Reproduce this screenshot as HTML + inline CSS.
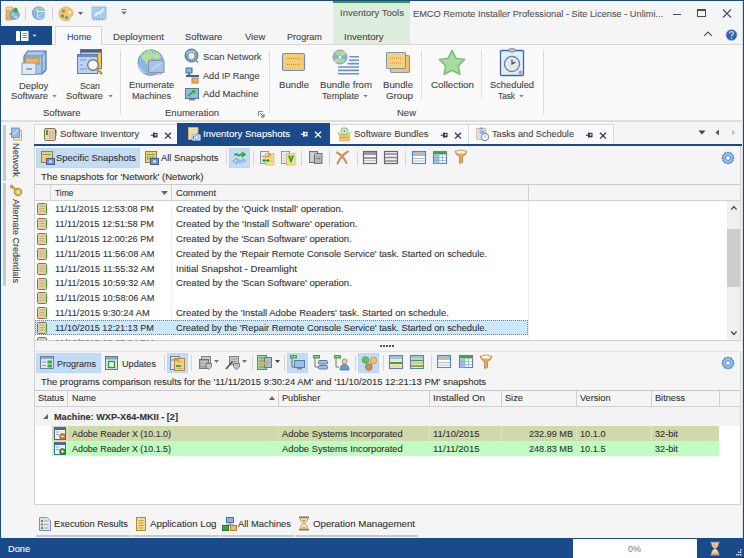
<!DOCTYPE html><html><head><meta charset='utf-8'><style>
html,body{margin:0;padding:0;width:744px;height:558px;overflow:hidden;background:#f5f5f5;font-family:"Liberation Sans",sans-serif;position:relative}
div{box-sizing:border-box}
</style></head><body>
<div style='position:absolute;left:0px;top:0px;width:744px;height:558px;background:#f5f5f5;'></div>
<div style='position:absolute;left:333px;top:0px;width:77px;height:44px;background:#deeede;'></div>
<div style='position:absolute;left:333px;top:1px;width:77px;height:2px;background:#3a9a3a;'></div>
<div style='position:absolute;left:0px;top:0px;width:744px;height:1px;background:#1a4a8a;'></div>
<div style='position:absolute;left:0px;top:0px;width:1px;height:558px;background:#1a4a8a;'></div>
<div style='position:absolute;left:743px;top:0px;width:1px;height:558px;background:#1a4a8a;'></div>
<div style='position:absolute;left:1px;top:44px;width:742px;height:1px;background:#d6d6d6;'></div>
<div style='position:absolute;left:1px;top:26px;width:51px;height:19px;background:#1a4a8a;'></div>
<div style='position:absolute;left:55px;top:26px;width:47px;height:19px;background:#fafafa;border:1px solid #d6d6d6;border-bottom:none;'></div>
<div style='position:absolute;left:1px;top:45px;width:742px;height:75px;background:#fafafa;'></div>
<div style='position:absolute;left:1px;top:120px;width:742px;height:2px;background:#dfdfdf;'></div>
<div style='position:absolute;left:673px;top:14px;width:8px;height:1px;background:#4e4a62;'></div>
<div style='position:absolute;left:697px;top:9px;width:9px;height:8px;background:transparent;border:1px solid #4e4a62;border-top-width:2px;'></div>
<svg style='position:absolute;left:722px;top:9px' width='10' height='9'><path d='M1 0.5 L9 8.5 M9 0.5 L1 8.5' stroke='#4e4a62' stroke-width='1.1'/></svg>
<svg style='position:absolute;left:703px;top:30px' width='10' height='7'><path d='M1.2 5.8 L5 2 L8.8 5.8' stroke='#4e4a62' stroke-width='1.2' fill='none'/></svg>
<svg style='position:absolute;left:725px;top:29px' width='13' height='13'><circle cx='6.5' cy='6' r='5.6' fill='#3463a8' stroke='#9cc4ee' stroke-width='.7'/><path d='M4.6 4.6 Q4.6 2.6 6.5 2.6 Q8.4 2.6 8.4 4.4 Q8.4 5.6 6.6 6.4 V7.6' stroke='#c8dcf4' stroke-width='1.2' fill='none'/><circle cx='6.6' cy='9.3' r='.8' fill='#c8dcf4'/></svg>
<div style='position:absolute;left:742px;top:1px;width:1px;height:537px;background:#dcdce4;'></div>
<div style='position:absolute;left:120px;top:50px;width:1px;height:64px;background:#dcdcdc;'></div>
<div style='position:absolute;left:269px;top:50px;width:1px;height:64px;background:#dcdcdc;'></div>
<div style='position:absolute;left:543px;top:50px;width:1px;height:64px;background:#dcdcdc;'></div>
<div style='position:absolute;left:421px;top:50px;width:1px;height:49px;background:#dcdcdc;'></div>
<div style='position:absolute;left:481px;top:50px;width:1px;height:49px;background:#dcdcdc;'></div>
<svg style='position:absolute;left:51.5px;top:94.8px' width='5' height='3'><path d='M0.3 0 L4.7 0 L2.5 2.4 Z' fill='#808080'/></svg>
<svg style='position:absolute;left:107.5px;top:94.8px' width='5' height='3'><path d='M0.3 0 L4.7 0 L2.5 2.4 Z' fill='#808080'/></svg>
<svg style='position:absolute;left:362.5px;top:94.8px' width='5' height='3'><path d='M0.3 0 L4.7 0 L2.5 2.4 Z' fill='#808080'/></svg>
<svg style='position:absolute;left:519px;top:94.8px' width='5' height='3'><path d='M0.3 0 L4.7 0 L2.5 2.4 Z' fill='#808080'/></svg>
<div style='position:absolute;left:3px;top:125px;width:3px;height:56px;background:#c9c9c9;'></div>
<div style='position:absolute;left:3px;top:183px;width:3px;height:103px;background:#c9c9c9;'></div>
<div style='position:absolute;left:34px;top:124px;width:144px;height:21px;background:#fafafa;border:1px solid #d9d9d9;border-bottom:none;'></div>
<div style='position:absolute;left:177px;top:123px;width:153px;height:23px;background:#1a4a8a;'></div>
<div style='position:absolute;left:330px;top:124px;width:139px;height:21px;background:#fafafa;border:1px solid #d9d9d9;border-bottom:none;border-left:none;'></div>
<div style='position:absolute;left:468px;top:124px;width:146px;height:21px;background:#fafafa;border:1px solid #d9d9d9;border-bottom:none;'></div>
<div style='position:absolute;left:34px;top:144px;width:708px;height:2px;background:#1a4a8a;'></div>
<div style='position:absolute;left:34px;top:146px;width:1px;height:359px;background:#d4d4d4;'></div>
<div style='position:absolute;left:740px;top:146px;width:1px;height:359px;background:#d4d4d4;'></div>
<div style='position:absolute;left:36px;top:148px;width:104px;height:20px;background:#c2dcf6;border:1px dotted #b4d2f0;'></div>
<div style='position:absolute;left:229px;top:148px;width:21px;height:20px;background:#c2dcf6;border:1px dotted #b4d2f0;'></div>
<div style='position:absolute;left:226px;top:150px;width:1px;height:16px;background:#d6d6d6;'></div>
<div style='position:absolute;left:253px;top:150px;width:1px;height:16px;background:#d6d6d6;'></div>
<div style='position:absolute;left:301px;top:150px;width:1px;height:16px;background:#d6d6d6;'></div>
<div style='position:absolute;left:329px;top:150px;width:1px;height:16px;background:#d6d6d6;'></div>
<div style='position:absolute;left:357px;top:150px;width:1px;height:16px;background:#d6d6d6;'></div>
<div style='position:absolute;left:405px;top:150px;width:1px;height:16px;background:#d6d6d6;'></div>
<div style='position:absolute;left:35px;top:184px;width:705px;height:17px;background:#f5f5f5;border-top:1px solid #c9c9c9;border-bottom:1px solid #d2d2d2;'></div>
<div style='position:absolute;left:50px;top:185px;width:1px;height:15px;background:#d8d8d8;'></div>
<div style='position:absolute;left:171px;top:185px;width:1px;height:15px;background:#d0d0d0;'></div>
<div style='position:absolute;left:528px;top:185px;width:1px;height:15px;background:#d0d0d0;'></div>
<svg style='position:absolute;left:161px;top:191px' width='7' height='4'><path d='M0 0 L7 0 L3.5 4 Z' fill='#666'/></svg>
<div style='position:absolute;left:35px;top:201px;width:692px;height:139px;background:#ffffff;'></div>
<div style='position:absolute;left:171px;top:201px;width:1px;height:139px;background:#f0f0f0;'></div>
<div style='position:absolute;left:528px;top:201px;width:1px;height:139px;background:#f0f0f0;'></div>
<div style='position:absolute;left:727px;top:201px;width:13px;height:139px;background:#f0f0f0;'></div>
<div style='position:absolute;left:727px;top:229px;width:13px;height:58px;background:#cdcdcd;'></div>
<svg style='position:absolute;left:730px;top:205px' width='8' height='6'><path d='M1.2 4.6 L3.9 1.6 L6.6 4.6' stroke='#4e4a62' stroke-width='1.4' fill='none'/></svg>
<svg style='position:absolute;left:730px;top:330px' width='8' height='6'><path d='M1.2 1.4 L3.9 4.4 L6.6 1.4' stroke='#4e4a62' stroke-width='1.4' fill='none'/></svg>
<div style='position:absolute;left:35px;top:340px;width:706px;height:1px;background:#cfcfcf;'></div>
<div style='position:absolute;left:35px;top:320px;width:493px;height:15px;background:#cce8fa;border:1px dotted #6a84a8;'></div>
<div style='position:absolute;left:35px;top:341px;width:706px;height:10px;background:#f5f5f5;'></div>
<div style='position:absolute;left:380px;top:345px;width:2px;height:2px;background:#555;'></div>
<div style='position:absolute;left:383px;top:345px;width:2px;height:2px;background:#555;'></div>
<div style='position:absolute;left:386px;top:345px;width:2px;height:2px;background:#555;'></div>
<div style='position:absolute;left:389px;top:345px;width:2px;height:2px;background:#555;'></div>
<div style='position:absolute;left:392px;top:345px;width:2px;height:2px;background:#555;'></div>
<div style='position:absolute;left:35px;top:351px;width:706px;height:1px;background:#e3e3e3;'></div>
<div style='position:absolute;left:36px;top:353px;width:65px;height:20px;background:#c2dcf6;border:1px dotted #b4d2f0;'></div>
<div style='position:absolute;left:167px;top:353px;width:21px;height:20px;background:#c2dcf6;border:1px dotted #b4d2f0;'></div>
<div style='position:absolute;left:287px;top:353px;width:21px;height:20px;background:#c2dcf6;border:1px dotted #b4d2f0;'></div>
<div style='position:absolute;left:358px;top:353px;width:21px;height:20px;background:#c2dcf6;border:1px dotted #b4d2f0;'></div>
<div style='position:absolute;left:164px;top:355px;width:1px;height:16px;background:#d6d6d6;'></div>
<div style='position:absolute;left:191px;top:355px;width:1px;height:16px;background:#d6d6d6;'></div>
<div style='position:absolute;left:252px;top:355px;width:1px;height:16px;background:#d6d6d6;'></div>
<div style='position:absolute;left:284px;top:355px;width:1px;height:16px;background:#d6d6d6;'></div>
<div style='position:absolute;left:355px;top:355px;width:1px;height:16px;background:#d6d6d6;'></div>
<div style='position:absolute;left:383px;top:355px;width:1px;height:16px;background:#d6d6d6;'></div>
<div style='position:absolute;left:431px;top:355px;width:1px;height:16px;background:#d6d6d6;'></div>
<div style='position:absolute;left:35px;top:390px;width:705px;height:17px;background:#f5f5f5;border-top:1px solid #c9c9c9;border-bottom:1px solid #d2d2d2;'></div>
<div style='position:absolute;left:67px;top:391px;width:1px;height:15px;background:#d0d0d0;'></div>
<div style='position:absolute;left:278px;top:391px;width:1px;height:15px;background:#d0d0d0;'></div>
<div style='position:absolute;left:429px;top:391px;width:1px;height:15px;background:#d0d0d0;'></div>
<div style='position:absolute;left:501px;top:391px;width:1px;height:15px;background:#d0d0d0;'></div>
<div style='position:absolute;left:576px;top:391px;width:1px;height:15px;background:#d0d0d0;'></div>
<div style='position:absolute;left:651px;top:391px;width:1px;height:15px;background:#d0d0d0;'></div>
<div style='position:absolute;left:719px;top:391px;width:1px;height:15px;background:#d0d0d0;'></div>
<svg style='position:absolute;left:269px;top:396px' width='6' height='4'><path d='M0 4 L6 4 L3 0 Z' fill='#666'/></svg>
<div style='position:absolute;left:35px;top:407px;width:705px;height:98px;background:#ffffff;'></div>
<div style='position:absolute;left:35px;top:407px;width:705px;height:19px;background:#f3f3f3;'></div>
<svg style='position:absolute;left:43px;top:414px' width='5' height='5'><path d='M5 0 L5 5 L0 5 Z' fill='#666'/></svg>
<div style='position:absolute;left:52px;top:426px;width:667px;height:15px;background:#cfd9aa;'></div>
<div style='position:absolute;left:52px;top:441px;width:667px;height:15px;background:#c0fdc0;'></div>
<div style='position:absolute;left:67px;top:426px;width:1px;height:30px;background:transparent;border-left:1px dotted rgba(255,255,255,.55);'></div>
<div style='position:absolute;left:278px;top:426px;width:1px;height:30px;background:transparent;border-left:1px dotted rgba(255,255,255,.55);'></div>
<div style='position:absolute;left:429px;top:426px;width:1px;height:30px;background:transparent;border-left:1px dotted rgba(255,255,255,.55);'></div>
<div style='position:absolute;left:501px;top:426px;width:1px;height:30px;background:transparent;border-left:1px dotted rgba(255,255,255,.55);'></div>
<div style='position:absolute;left:576px;top:426px;width:1px;height:30px;background:transparent;border-left:1px dotted rgba(255,255,255,.55);'></div>
<div style='position:absolute;left:651px;top:426px;width:1px;height:30px;background:transparent;border-left:1px dotted rgba(255,255,255,.55);'></div>
<div style='position:absolute;left:34px;top:504px;width:707px;height:1px;background:#d4d4d4;'></div>
<div style='position:absolute;left:36px;top:535px;width:95px;height:2px;background:#c8c8c8;'></div>
<div style='position:absolute;left:132px;top:535px;width:88px;height:2px;background:#c8c8c8;'></div>
<div style='position:absolute;left:221px;top:535px;width:74px;height:2px;background:#c8c8c8;'></div>
<div style='position:absolute;left:296px;top:535px;width:122px;height:2px;background:#c8c8c8;'></div>
<div style='position:absolute;left:0px;top:538px;width:744px;height:20px;background:#1a4a8a;'></div>
<div style='position:absolute;left:573px;top:539px;width:124px;height:19px;background:#ffffff;'></div>
<svg style='position:absolute;left:5px;top:5px;overflow:visible' width='16' height='16' viewBox='0 0 16 16'><rect x='1' y='2' width='6.5' height='13' rx='.5' fill='#e2aa62' stroke='#c08a50' stroke-width='.6'/><rect x='1.5' y='2.5' width='5.5' height='2' fill='#f4dcb0'/><path d='M2.5 6 H5.5 M2.5 8.5 H5.5 M2.5 11 H5.5' stroke='#f6d8a0' stroke-width='.8' stroke-dasharray='1 1'/><circle cx='9.7' cy='9.8' r='4.6' fill='#7ab0e4' stroke='#4a7ab8' stroke-width='.6'/><path d='M6 8.5 Q8 7 10 8 L9 11 L7 11.5 Z' fill='#9ad8b0'/><circle cx='11' cy='12' r='1.6' fill='#b8e0f8'/><path d='M8 4 Q10 1.5 12 3 L13 6 L11 8 L9 6.5 Z' fill='#3aaa3a'/></svg>
<div style='position:absolute;left:25px;top:7px;width:1px;height:13px;background:#d0d0d0;'></div>
<svg style='position:absolute;left:31px;top:6px;overflow:visible' width='16' height='16' viewBox='0 0 16 16'><circle cx='7.7' cy='7.1' r='6.4' fill='#8ab6e2' stroke='#6a96cc' stroke-width='.7'/><path d='M2.5 4.5 Q6 1 11.5 2 L12 4.5 L8 6 L5 5.5 Z' fill='#a6dcb0'/><circle cx='9' cy='3.5' r='.8' fill='#3aaa3a'/><rect x='6.7' y='5.5' width='7.3' height='6.7' fill='#8cb8e8' stroke='#f0f4f8' stroke-width='.8'/><path d='M8 10 L12 7' stroke='#c4dcf4' stroke-width='1'/><rect x='8' y='12.5' width='5' height='.8' fill='#9aa'/></svg>
<div style='position:absolute;left:52px;top:7px;width:1px;height:13px;background:#d0d0d0;'></div>
<svg style='position:absolute;left:58px;top:6px;overflow:visible' width='16' height='16' viewBox='0 0 16 16'><path d='M8 1 C12 1 15 4 15 7.5 C15 10.5 13 10 12 11 C11 12 13 14 10 14.5 C5 15.5 1 12 1 8 C1 4 4 1 8 1 Z' fill='#f4c66e' stroke='#d8a050' stroke-width='.7'/><circle cx='5.5' cy='5' r='1.5' fill='#9a7a70'/><circle cx='11.5' cy='6.5' r='1.3' fill='#ffffff'/><circle cx='4.5' cy='10' r='1.7' fill='#4aae3e'/><circle cx='8.5' cy='11.5' r='1.6' fill='#5a8ad0'/></svg>
<svg style='position:absolute;left:78px;top:12px;overflow:visible' width='5' height='3' viewBox='0 0 5 3'><path d='M0 0 L5 0 L2.5 3 Z' fill='#666'/></svg>
<svg style='position:absolute;left:91px;top:6px;overflow:visible' width='16' height='16' viewBox='0 0 16 16'><rect x='1' y='1' width='14' height='11.5' fill='#a6cef4' stroke='#8ab8e6' stroke-width='.8'/><path d='M4 10 Q6 6 9 7 Q11 4 13 3' stroke='#f4f8fc' stroke-width='2.2' fill='none' opacity='.85'/><path d='M2 13.6 H14' stroke='#d08a30' stroke-width='1.2' stroke-dasharray='1 .5'/></svg>
<svg style='position:absolute;left:121px;top:9px;overflow:visible' width='6' height='6' viewBox='0 0 6 6'><rect x='0.5' y='0' width='5' height='1' fill='#777'/><path d='M0 2.5 L6 2.5 L3 5.5 Z' fill='#777'/></svg>
<svg style='position:absolute;left:15px;top:30px;overflow:visible' width='24' height='12' viewBox='0 0 24 12'><rect x='1' y='1' width='4' height='10' fill='#fff'/><rect x='6' y='1' width='7.5' height='10' fill='#f4f8fc'/><path d='M7.5 3.5 H12 M7.5 5.5 H12 M7.5 7.5 H12' stroke='#6a8ac0' stroke-width='.9'/><path d='M17.5 4.8 L21.5 4.8 L19.5 6.8 Z' fill='#fff'/></svg>
<svg style='position:absolute;left:18px;top:46px;overflow:visible' width='32' height='32' viewBox='0 0 32 32'><path d='M6 10 L10 5 L28 5 L28 24 L24 28 L6 28 Z' fill='#a6c8ee' stroke='#4b73ad' stroke-width='1.2'/><path d='M6 10 L24 10 L28 5 M24 10 L24 28' stroke='#5e86bf' fill='none'/><rect x='7' y='12' width='14' height='6' fill='#f0b45a' stroke='#b07a30' stroke-width='.8'/><rect x='4' y='17' width='14' height='11.5' fill='#dcebf9' stroke='#7f9dc6'/><path d='M8 23 H14' stroke='#7a8fa8' stroke-width='1.5'/></svg>
<svg style='position:absolute;left:74px;top:46px;overflow:visible' width='32' height='32' viewBox='0 0 32 32'><rect x='6.5' y='3.5' width='21' height='19' fill='#f3c94c' stroke='#6d6aa0'/><rect x='7' y='4' width='20' height='2.5' fill='#3d5fa8'/><rect x='3.5' y='8.5' width='20' height='19' fill='#b9d5f2' stroke='#5d7fb5'/><rect x='4' y='9' width='19' height='2' fill='#6a8ac8'/><path d='M6 14 H12 M6 19 H9 M6 23 H13' stroke='#7f9cc4' stroke-width='1.2'/><path d='M22.5 22.5 L27.5 27.5' stroke='#d09a4a' stroke-width='2.6' stroke-linecap='round'/><circle cx='19' cy='19' r='5.3' fill='#f8f8f8' stroke='#7a7a80' stroke-width='1.4'/></svg>
<svg style='position:absolute;left:134px;top:46px;overflow:visible' width='34' height='34' viewBox='0 0 34 34'><circle cx='16.8' cy='16.6' r='12.8' fill='#8cb6e2' stroke='#6690c8' stroke-width='.9'/><path d='M6.5 9 Q10 5 15 4.2 Q20 4 25 7.5 L27 11.5 L23 13.5 L18 12 L15 15 L13 19 L11 15 L8 13 Z' fill='#b4dea0'/><path d='M9 8 L13 6 M18 6 L22 8' stroke='#3aa040' stroke-width='1' stroke-dasharray='1 1.5'/><path d='M5 19 Q6 24 11 27' stroke='#a8c8ec' stroke-width='2' fill='none'/><rect x='14.5' y='14.5' width='15.5' height='12' rx='1' fill='#a4c4ea' stroke='#8a96a8' stroke-width='1.1'/><path d='M17 24 L27 17' stroke='#c4daf2' stroke-width='1.5'/><rect x='17' y='27.2' width='11' height='1.3' fill='#a8acb4'/></svg>
<svg style='position:absolute;left:182px;top:46px;overflow:visible' width='20' height='20' viewBox='0 0 20 20'><circle cx='9.5' cy='9.5' r='6.5' fill='#6f9fd6' stroke='#4a74b0'/><path d='M4 7 Q8 3 14 5 L12 8 L6 9 Z' fill='#9ed48a'/><circle cx='9.5' cy='10' r='3.5' fill='#f0f0f0' stroke='#8aa0b8'/><path d='M12.5 13 L16 16.5' stroke='#d0903a' stroke-width='1.8'/></svg>
<svg style='position:absolute;left:182px;top:65px;overflow:visible' width='20' height='20' viewBox='0 0 20 20'><rect x='4' y='3' width='6' height='5' fill='#8cb4e0' stroke='#4a70a8'/><rect x='4' y='10' width='13' height='2' fill='#3a62a8'/><rect x='6' y='8' width='2' height='2' fill='#4a70a8'/><rect x='10' y='13' width='6' height='5' fill='#f0b060' stroke='#c08040'/></svg>
<svg style='position:absolute;left:182px;top:84px;overflow:visible' width='20' height='20' viewBox='0 0 20 20'><rect x='3.5' y='4.5' width='13' height='10' fill='#8ebbe8' stroke='#5e7696'/><path d='M6 12 L12 7 M10 7 H12.5 V9.5' stroke='#3ab03a' stroke-width='1.8' fill='none'/><rect x='7' y='15' width='6' height='1.5' fill='#888'/></svg>
<svg style='position:absolute;left:278px;top:46px;overflow:visible' width='32' height='32' viewBox='0 0 32 32'><rect x='4.5' y='7.5' width='22' height='17' rx='1.5' fill='#f6cb76' stroke='#6f8dbf' stroke-width='1.2'/><path d='M9 12.5 H22 M9 18.5 H22' stroke='#b9904a' stroke-width='1' stroke-dasharray='1 1'/></svg>
<svg style='position:absolute;left:330px;top:46px;overflow:visible' width='32' height='32' viewBox='0 0 32 32'><circle cx='10' cy='11' r='7' fill='#98dcb0' stroke='#8a7a8a' stroke-width='.8'/><path d='M10 11 L3.9 7.5 A7 7 0 0 0 3.9 14.5 Z' fill='#7fb0e0'/><path d='M10 11 L16.1 14.5 A7 7 0 0 0 16.1 7.5 Z' fill='#7fb0e0'/><path d='M10 11 L14 5.3 A7 7 0 0 1 16.1 7.5 Z' fill='#f4d070'/><path d='M10 11 L6 16.7 A7 7 0 0 1 3.9 14.5 Z' fill='#f4d070'/><circle cx='10' cy='11' r='1.6' fill='#fff' stroke='#888' stroke-width='.5'/><path d='M19.5 10.8 H29 M19 14.2 H29 M17.5 17.6 H29 M8 21 H29 M8 24.4 H29 M8 27.8 H29' stroke='#6a92c8' stroke-width='1.6'/></svg>
<svg style='position:absolute;left:384px;top:50px;overflow:visible' width='28' height='26' viewBox='0 0 28 26'><rect x='6.5' y='5.5' width='19' height='17' rx='1.5' fill='#f3c36a' stroke='#7d93b8' stroke-width='1.1'/><rect x='2.5' y='2.5' width='19' height='16' rx='1.5' fill='#f7cf7e' stroke='#7d93b8' stroke-width='1.1'/><path d='M6 8 H18 M6 13 H18' stroke='#b9904a' stroke-width='1' stroke-dasharray='1 1'/></svg>
<svg style='position:absolute;left:436px;top:47px;overflow:visible' width='32' height='32' viewBox='0 0 32 32'><path d='M16.0 3.4 L19.9 11.3 L28.6 12.5 L22.3 18.6 L23.8 27.3 L16.0 23.2 L8.2 27.3 L9.7 18.6 L3.4 12.5 L12.1 11.3 Z' fill='#a8dca4' stroke='#7cbc78' stroke-width='1.6' stroke-linejoin='round'/><path d='M16.0 3.4 L19.9 11.3 L28.6 12.5 L22.3 18.6 L23.8 27.3 L16.0 23.2 L8.2 27.3 L9.7 18.6 L3.4 12.5 L12.1 11.3 Z' fill='none' stroke='#a8dca4' stroke-width='.6' stroke-linejoin='round' transform='translate(16 16.6) scale(.8) translate(-16 -16.6)' opacity='.5'/></svg>
<svg style='position:absolute;left:496px;top:46px;overflow:visible' width='32' height='32' viewBox='0 0 32 32'><rect x='4.5' y='4.5' width='23' height='25' rx='1' fill='#e4eef8' stroke='#3a68b0' stroke-width='1.3'/><rect x='13' y='2.5' width='6' height='3.5' rx='1.5' fill='#b8bcc4' stroke='#7a808a' stroke-width='.8'/><circle cx='16' cy='18' r='7.6' fill='#c4d0dc' stroke='#6a86aa' stroke-width='1.2'/><circle cx='16' cy='18' r='5.6' fill='#dfe6ee' stroke='#ffffff' stroke-width='.8'/><path d='M16 13.5 V18 L19.5 16' stroke='#3a3a44' stroke-width='1.1' fill='none'/><circle cx='24.5' cy='26.5' r='2' fill='#a0a6b0'/></svg>
<svg style='position:absolute;left:258px;top:111px;overflow:visible' width='8' height='8' viewBox='0 0 8 8'><path d='M0.5 5 V0.5 H5' stroke='#888' fill='none'/><path d='M2 2 L6 6 M6 3 V6 H3' stroke='#666' fill='none'/></svg>
<svg style='position:absolute;left:9px;top:127px;overflow:visible' width='14' height='14' viewBox='0 0 14 14'><rect x='4.5' y='3.5' width='8' height='9.5' fill='#f8e8c8' stroke='#d8a050' stroke-width='.9'/><rect x='2.5' y='1' width='8' height='9.5' fill='#94bce8' stroke='#6a90c0' stroke-width='.8'/><path d='M4 8 L9 3' stroke='#c8e0f8' stroke-width='1.2'/><path d='M0.5 7 H2.5' stroke='#555'/></svg>
<svg style='position:absolute;left:9px;top:183px;overflow:visible' width='14' height='14' viewBox='0 0 14 14'><circle cx='9' cy='9' r='3.6' fill='#f0c060' stroke='#c08a30' stroke-width='1.2'/><path d='M7 7 L2 2 M2 2 L2 5 M4 4 L4 6' stroke='#d39a3a' stroke-width='2' fill='none'/><circle cx='9' cy='9' r='1.2' fill='#fff'/></svg>
<svg style='position:absolute;left:149.5px;top:132px;overflow:visible' width='22' height='9' viewBox='0 0 22 9'><path d='M0.8 3.2 H3.2' stroke='#2a3560' stroke-width='1.1'/><path d='M3.6 0.6 V5.8' stroke='#2a3560' stroke-width='1.1'/><rect x='4.2' y='1.4' width='2.8' height='3.4' fill='none' stroke='#2a3560' stroke-width='1.1'/><path d='M4.2 4.3 H7' stroke='#2a3560' stroke-width='1.4'/><path d='M15 0.8 L21 6.6 M21 0.8 L15 6.6' stroke='#2a3560' stroke-width='1.3'/></svg>
<svg style='position:absolute;left:300px;top:131px;overflow:visible' width='22' height='9' viewBox='0 0 22 9'><path d='M0.8 3.2 H3.2' stroke='#ffffff' stroke-width='1.1'/><path d='M3.6 0.6 V5.8' stroke='#ffffff' stroke-width='1.1'/><rect x='4.2' y='1.4' width='2.8' height='3.4' fill='none' stroke='#ffffff' stroke-width='1.1'/><path d='M4.2 4.3 H7' stroke='#ffffff' stroke-width='1.4'/><path d='M15 0.8 L21 6.6 M21 0.8 L15 6.6' stroke='#ffffff' stroke-width='1.3'/></svg>
<svg style='position:absolute;left:439.5px;top:132px;overflow:visible' width='22' height='9' viewBox='0 0 22 9'><path d='M0.8 3.2 H3.2' stroke='#2a3560' stroke-width='1.1'/><path d='M3.6 0.6 V5.8' stroke='#2a3560' stroke-width='1.1'/><rect x='4.2' y='1.4' width='2.8' height='3.4' fill='none' stroke='#2a3560' stroke-width='1.1'/><path d='M4.2 4.3 H7' stroke='#2a3560' stroke-width='1.4'/><path d='M15 0.8 L21 6.6 M21 0.8 L15 6.6' stroke='#2a3560' stroke-width='1.3'/></svg>
<svg style='position:absolute;left:584.5px;top:132px;overflow:visible' width='22' height='9' viewBox='0 0 22 9'><path d='M0.8 3.2 H3.2' stroke='#2a3560' stroke-width='1.1'/><path d='M3.6 0.6 V5.8' stroke='#2a3560' stroke-width='1.1'/><rect x='4.2' y='1.4' width='2.8' height='3.4' fill='none' stroke='#2a3560' stroke-width='1.1'/><path d='M4.2 4.3 H7' stroke='#2a3560' stroke-width='1.4'/><path d='M15 0.8 L21 6.6 M21 0.8 L15 6.6' stroke='#2a3560' stroke-width='1.3'/></svg>
<svg style='position:absolute;left:43px;top:128px;overflow:visible' width='14' height='14' viewBox='0 0 14 14'><rect x='1.5' y='0.5' width='11' height='12' rx='1.5' fill='#ead3ab' stroke='#8c6c52'/><rect x='3' y='2' width='2' height='5' fill='#3aa03a'/><path d='M7 3 V11 M10 3 V11' stroke='#b8a080' stroke-width='.8'/><rect x='12' y='2' width='1.5' height='3' fill='#2d5fa8'/><rect x='12' y='5' width='1.5' height='3' fill='#3aa03a'/></svg>
<svg style='position:absolute;left:187px;top:126px;overflow:visible' width='15' height='15' viewBox='0 0 15 15'><rect x='1.5' y='1.5' width='9.5' height='12' fill='#f8e4a8' stroke='#e8b060' stroke-width='.8'/><path d='M2.5 4 H10 M2.5 6.5 H10 M2.5 9 H10' stroke='#c8a8a0' stroke-width='.8' stroke-dasharray='1 1'/><circle cx='10.6' cy='7.6' r='.8' fill='#3aa83a'/><rect x='5' y='8.5' width='8.5' height='6' rx='1' fill='#c8dcf4' stroke='#8aa8d0' stroke-width='.7'/><circle cx='9.8' cy='11.5' r='1.8' fill='#fff' stroke='#6a7aa0' stroke-width='.7'/><path d='M6.5 10 V13' stroke='#4a6a9a' stroke-width='.8'/></svg>
<svg style='position:absolute;left:337px;top:127px;overflow:visible' width='15' height='15' viewBox='0 0 15 15'><circle cx='7.4' cy='4.2' r='3.1' fill='none' stroke='#8adca0' stroke-width='1.8'/><circle cx='7.4' cy='4.2' r='1' fill='#8a6a50'/><path d='M1 5 L3.5 7.5 L7 8 L11 7.5 L13.2 5 L12.5 8.5 L12.5 13.8 H2.5 V8.5 Z' fill='#f2c46c' stroke='#d8a050' stroke-width='.6'/><path d='M3.5 10.5 H11' stroke='#c89040' stroke-width='.7'/></svg>
<svg style='position:absolute;left:475px;top:127px;overflow:visible' width='15' height='15' viewBox='0 0 15 15'><rect x='1.5' y='1.5' width='9.5' height='11' fill='#dce2ec' stroke='#d8a070' stroke-width='.9' stroke-dasharray='1 .5'/><rect x='4.5' y='0.5' width='3.5' height='1.8' fill='#8a9ab0'/><rect x='4.5' y='3.5' width='5' height='3' fill='#8ab4e8'/><circle cx='10' cy='10' r='3.6' fill='#f8f8fa' stroke='#7a98b8' stroke-width='1.1'/><path d='M10 8 V10 L11 11' stroke='#c07050' stroke-width='.6' fill='none'/></svg>
<svg style='position:absolute;left:698px;top:130px;overflow:visible' width='8' height='5' viewBox='0 0 8 5'><path d='M0.5 0.5 L7.5 0.5 L4 4.5 Z' fill='#444'/></svg>
<svg style='position:absolute;left:715px;top:129px;overflow:visible' width='5' height='7' viewBox='0 0 5 7'><path d='M4 0.5 L4 6.5 L0.5 3.5 Z' fill='#555'/></svg>
<svg style='position:absolute;left:731px;top:129px;overflow:visible' width='5' height='7' viewBox='0 0 5 7'><path d='M1 0.5 L1 6.5 L4.5 3.5 Z' fill='#c4c4c4'/></svg>
<svg style='position:absolute;left:721px;top:151px;overflow:visible' width='14' height='14' viewBox='0 0 14 14'><path d='M7 0.8 L8.2 2.3 L10.1 1.7 L10.5 3.6 L12.3 4.2 L11.7 6.1 L13.2 7 L11.7 7.9 L12.3 9.8 L10.5 10.4 L10.1 12.3 L8.2 11.7 L7 13.2 L5.8 11.7 L3.9 12.3 L3.5 10.4 L1.7 9.8 L2.3 7.9 L0.8 7 L2.3 6.1 L1.7 4.2 L3.5 3.6 L3.9 1.7 L5.8 2.3 Z' fill='#9ec2ea' stroke='#4f7fbf' stroke-width='1'/><circle cx='7' cy='7' r='2.4' fill='#f5f5f5' stroke='#4f7fbf'/></svg>
<svg style='position:absolute;left:721px;top:356px;overflow:visible' width='14' height='14' viewBox='0 0 14 14'><path d='M7 0.8 L8.2 2.3 L10.1 1.7 L10.5 3.6 L12.3 4.2 L11.7 6.1 L13.2 7 L11.7 7.9 L12.3 9.8 L10.5 10.4 L10.1 12.3 L8.2 11.7 L7 13.2 L5.8 11.7 L3.9 12.3 L3.5 10.4 L1.7 9.8 L2.3 7.9 L0.8 7 L2.3 6.1 L1.7 4.2 L3.5 3.6 L3.9 1.7 L5.8 2.3 Z' fill='#9ec2ea' stroke='#4f7fbf' stroke-width='1'/><circle cx='7' cy='7' r='2.4' fill='#f5f5f5' stroke='#4f7fbf'/></svg>
<svg style='position:absolute;left:40px;top:150px;overflow:visible' width='15' height='15' viewBox='0 0 15 15'><rect x='1.5' y='1.5' width='11' height='11' fill='#f4cc6e' stroke='#9c7c50'/><path d='M3 4.5 H11' stroke='#2a9a2a' stroke-width='1.2' stroke-dasharray='1 .6'/><rect x='6.5' y='8.5' width='8' height='6' fill='#6f96cc' stroke='#3d5f96'/><circle cx='10.5' cy='11.5' r='1.5' fill='#dde'/></svg>
<svg style='position:absolute;left:144px;top:150px;overflow:visible' width='15' height='15' viewBox='0 0 15 15'><rect x='1.5' y='1.5' width='11' height='11' fill='#f4cc6e' stroke='#9c7c50'/><path d='M3 4.5 H11' stroke='#2a9a2a' stroke-width='1.2' stroke-dasharray='1 .6'/><path d='M3 7 H11 M3 9 H7' stroke='#2a9a2a' stroke-width='1' stroke-dasharray='1 .6'/><rect x='6.5' y='8.5' width='8' height='6' fill='#6f96cc' stroke='#3d5f96'/><circle cx='10.5' cy='11.5' r='1.5' fill='#dde'/></svg>
<svg style='position:absolute;left:229px;top:148px;overflow:visible' width='21' height='20' viewBox='0 0 21 20'><path d='M5.5 6 Q7 4.5 8.5 6 Q10 7.5 11.5 6 H13 V3.8 L17 6.5 L13 9.2 V7.5 H11.5 Q10 9 8.5 7.5 Q7 6 5.5 7.5 Z' fill='#3cae3c' stroke='#2a9a2a' stroke-width='.6'/><path d='M16 12 Q14.5 10.5 13 12 Q11.5 13.5 10 12 H8 V10 L3.8 13 L8 16 V14 H10 Q11.5 15.5 13 14 Q14.5 12.5 16 14 Z' fill='#b8d4f0' stroke='#7a9cc8' stroke-width='.9'/></svg>
<svg style='position:absolute;left:258px;top:149px;overflow:visible' width='17' height='17' viewBox='0 0 17 17'><rect x='2.5' y='2.5' width='8' height='12' fill='#e8f0f8' stroke='#7a8cb8' stroke-width='.9'/><rect x='7.5' y='4.5' width='8.5' height='11.5' fill='#f8e090' stroke='#d0a050' stroke-width='.9' stroke-dasharray='1 .6'/><path d='M3.5 7.5 H11 L12.5 6 L11 4.5 V7.5' fill='#d8a050' stroke='#d8a050' stroke-width='1.6'/><path d='M5 11.5 H11 M6.5 10 L5 11.5 L6.5 13 M9.5 10 L11 11.5 L9.5 13' stroke='#2aa02a' stroke-width='1.2' fill='none'/><path d='M12 9 H14.5 M12 12 H14.5' stroke='#8aa0c0' stroke-width='.6'/></svg>
<svg style='position:absolute;left:280px;top:149px;overflow:visible' width='17' height='17' viewBox='0 0 17 17'><rect x='1.5' y='2.5' width='8' height='12' fill='#e8f0f8' stroke='#7a8cb8' stroke-width='.9'/><path d='M3 6 H8 M3 9 H8 M3 12 H8' stroke='#a8bcd8' stroke-width='.7'/><rect x='6.5' y='4.5' width='8.5' height='11.5' fill='#f8e090' stroke='#d0a050' stroke-width='.9' stroke-dasharray='1 .6'/><path d='M8 6.5 H10.3 L11 11 L11.7 6.5 H14 L11.6 13.5 H10.4 Z' fill='#2aa02a'/></svg>
<svg style='position:absolute;left:307px;top:149px;overflow:visible' width='17' height='17' viewBox='0 0 17 17'><rect x='2.5' y='2.5' width='8' height='11' fill='#c4c4c8' stroke='#6a6a70' stroke-width='.9'/><rect x='7.5' y='4.5' width='7.5' height='10' fill='#b8b8bc' stroke='#6a6a70' stroke-width='.9'/><path d='M3.5 5 H9 M3.5 8 H6 M3.5 11 H6' stroke='#f0f0f0' stroke-width='.8'/><path d='M8.5 9.5 H13 L11.5 8 M13 9.5 L11.5 11' stroke='#8a7a9a' stroke-width='.9' fill='none'/></svg>
<svg style='position:absolute;left:335px;top:150px;overflow:visible' width='15' height='15' viewBox='0 0 15 15'><path d='M13 1.5 Q6.5 5 2.5 13.5' stroke='#c9945a' stroke-width='2' stroke-linecap='round' fill='none'/><path d='M2 2.5 Q8.5 6 11.5 13' stroke='#c9945a' stroke-width='2' stroke-linecap='round' fill='none'/></svg>
<svg style='position:absolute;left:362px;top:150px;overflow:visible' width='16' height='16' viewBox='0 0 16 16'><rect x='1.5' y='1.5' width='13' height='12' fill='#f4f4f4' stroke='#6a6a6a' stroke-width='1.2'/><rect x='2' y='2' width='12' height='3' fill='#9a9a9a'/><rect x='2' y='7' width='12' height='2' fill='#9a9a9a'/><path d='M2 10.5 H14' stroke='#bbb'/></svg>
<svg style='position:absolute;left:383px;top:150px;overflow:visible' width='16' height='16' viewBox='0 0 16 16'><rect x='1.5' y='1.5' width='13' height='12' fill='#f0f0f0' stroke='#6a6a6a' stroke-width='1.2'/><path d='M2 4 H14 M2 7.5 H14 M2 11 H14' stroke='#8a8a8a' stroke-width='1.6'/></svg>
<svg style='position:absolute;left:411px;top:150px;overflow:visible' width='16' height='16' viewBox='0 0 16 16'><rect x='1.5' y='1.5' width='13' height='12' fill='#ffffff' stroke='#5b82bd' stroke-width='1.1'/><rect x='2' y='2' width='12' height='4' fill='#9cc0e8'/><rect x='4' y='3' width='5' height='2' fill='#f0b840'/><path d='M2 8.5 H14 M2 11 H14' stroke='#9ab0d0' stroke-width='.8'/></svg>
<svg style='position:absolute;left:432px;top:150px;overflow:visible' width='16' height='16' viewBox='0 0 16 16'><rect x='1.5' y='1.5' width='13' height='12' fill='#ffffff' stroke='#5b82bd' stroke-width='1.1'/><rect x='2' y='2' width='12' height='2.5' fill='#3aa83a'/><rect x='2' y='4.5' width='5' height='9' fill='#9cc0e8'/><path d='M2 7.5 H14 M2 10.5 H14 M7 4.5 V14 M10.5 4.5 V14' stroke='#8aa8d0' stroke-width='.7'/></svg>
<svg style='position:absolute;left:454px;top:149px;overflow:visible' width='14' height='16' viewBox='0 0 14 16'><path d='M1 2.5 Q7 -0.5 13 2.5 Q12 6 8.5 7.5 V13.5 L5.5 14.5 V7.5 Q2 6 1 2.5 Z' fill='#e3aa5c' stroke='#b9813d' stroke-width='.8'/><ellipse cx='7' cy='3' rx='4.5' ry='1.6' fill='#fff3dc'/></svg>
<svg style='position:absolute;left:479px;top:354px;overflow:visible' width='14' height='16' viewBox='0 0 14 16'><path d='M1 2.5 Q7 -0.5 13 2.5 Q12 6 8.5 7.5 V13.5 L5.5 14.5 V7.5 Q2 6 1 2.5 Z' fill='#e3aa5c' stroke='#b9813d' stroke-width='.8'/><ellipse cx='7' cy='3' rx='4.5' ry='1.6' fill='#fff3dc'/></svg>
<svg style='position:absolute;left:36px;top:202.0px;overflow:visible' width='13' height='13' viewBox='0 0 13 13'><rect x='1.5' y='1.5' width='9' height='11' rx='1' fill='#e6cfa4' stroke='#8c7052'/><path d='M3.5 4 H8.5 M3.5 6.5 H8.5 M3.5 9 H8.5' stroke='#b89a70' stroke-width='.7'/><path d='M10.5 3 V11' stroke='#3aa03a' stroke-width='1.2'/></svg>
<svg style='position:absolute;left:36px;top:216.9px;overflow:visible' width='13' height='13' viewBox='0 0 13 13'><rect x='1.5' y='1.5' width='9' height='11' rx='1' fill='#e6cfa4' stroke='#8c7052'/><path d='M3.5 4 H8.5 M3.5 6.5 H8.5 M3.5 9 H8.5' stroke='#b89a70' stroke-width='.7'/><path d='M10.5 3 V11' stroke='#3aa03a' stroke-width='1.2'/></svg>
<svg style='position:absolute;left:36px;top:231.8px;overflow:visible' width='13' height='13' viewBox='0 0 13 13'><rect x='1.5' y='1.5' width='9' height='11' rx='1' fill='#e6cfa4' stroke='#8c7052'/><path d='M3.5 4 H8.5 M3.5 6.5 H8.5 M3.5 9 H8.5' stroke='#b89a70' stroke-width='.7'/><path d='M10.5 3 V11' stroke='#3aa03a' stroke-width='1.2'/></svg>
<svg style='position:absolute;left:36px;top:246.7px;overflow:visible' width='13' height='13' viewBox='0 0 13 13'><rect x='1.5' y='1.5' width='9' height='11' rx='1' fill='#e6cfa4' stroke='#8c7052'/><path d='M3.5 4 H8.5 M3.5 6.5 H8.5 M3.5 9 H8.5' stroke='#b89a70' stroke-width='.7'/><path d='M10.5 3 V11' stroke='#3aa03a' stroke-width='1.2'/></svg>
<svg style='position:absolute;left:36px;top:261.6px;overflow:visible' width='13' height='13' viewBox='0 0 13 13'><rect x='1.5' y='1.5' width='9' height='11' rx='1' fill='#e6cfa4' stroke='#8c7052'/><path d='M3.5 4 H8.5 M3.5 6.5 H8.5 M3.5 9 H8.5' stroke='#b89a70' stroke-width='.7'/><path d='M10.5 3 V11' stroke='#3aa03a' stroke-width='1.2'/></svg>
<svg style='position:absolute;left:36px;top:276.5px;overflow:visible' width='13' height='13' viewBox='0 0 13 13'><rect x='1.5' y='1.5' width='9' height='11' rx='1' fill='#e6cfa4' stroke='#8c7052'/><path d='M3.5 4 H8.5 M3.5 6.5 H8.5 M3.5 9 H8.5' stroke='#b89a70' stroke-width='.7'/><path d='M10.5 3 V11' stroke='#3aa03a' stroke-width='1.2'/></svg>
<svg style='position:absolute;left:36px;top:291.4px;overflow:visible' width='13' height='13' viewBox='0 0 13 13'><rect x='1.5' y='1.5' width='9' height='11' rx='1' fill='#e6cfa4' stroke='#8c7052'/><path d='M3.5 4 H8.5 M3.5 6.5 H8.5 M3.5 9 H8.5' stroke='#b89a70' stroke-width='.7'/><path d='M10.5 3 V11' stroke='#3aa03a' stroke-width='1.2'/></svg>
<svg style='position:absolute;left:36px;top:306.3px;overflow:visible' width='13' height='13' viewBox='0 0 13 13'><rect x='1.5' y='1.5' width='9' height='11' rx='1' fill='#e6cfa4' stroke='#8c7052'/><path d='M3.5 4 H8.5 M3.5 6.5 H8.5 M3.5 9 H8.5' stroke='#b89a70' stroke-width='.7'/><path d='M10.5 3 V11' stroke='#3aa03a' stroke-width='1.2'/></svg>
<svg style='position:absolute;left:36px;top:321.2px;overflow:visible' width='13' height='13' viewBox='0 0 13 13'><rect x='1.5' y='1.5' width='9' height='11' rx='1' fill='#e6cfa4' stroke='#8c7052'/><path d='M3.5 4 H8.5 M3.5 6.5 H8.5 M3.5 9 H8.5' stroke='#b89a70' stroke-width='.7'/><path d='M10.5 3 V11' stroke='#3aa03a' stroke-width='1.2'/></svg>
<svg style='position:absolute;left:36px;top:336.1px;overflow:visible' width='13' height='13' viewBox='0 0 13 13'><rect x='1.5' y='1.5' width='9' height='11' rx='1' fill='#e6cfa4' stroke='#8c7052'/><path d='M3.5 4 H8.5 M3.5 6.5 H8.5 M3.5 9 H8.5' stroke='#b89a70' stroke-width='.7'/><path d='M10.5 3 V11' stroke='#3aa03a' stroke-width='1.2'/></svg>
<div style='position:absolute;left:35px;top:341px;width:706px;height:10px;background:#f5f5f5;'></div>
<div style='position:absolute;left:35px;top:340px;width:706px;height:1px;background:#cfcfcf;'></div>
<div style='position:absolute;left:380px;top:345px;width:2px;height:2px;background:#555;'></div>
<div style='position:absolute;left:383px;top:345px;width:2px;height:2px;background:#555;'></div>
<div style='position:absolute;left:386px;top:345px;width:2px;height:2px;background:#555;'></div>
<div style='position:absolute;left:389px;top:345px;width:2px;height:2px;background:#555;'></div>
<div style='position:absolute;left:392px;top:345px;width:2px;height:2px;background:#555;'></div>
<div style='position:absolute;left:35px;top:351px;width:706px;height:1px;background:#e3e3e3;'></div>
<svg style='position:absolute;left:39px;top:355px;overflow:visible' width='16' height='16' viewBox='0 0 16 16'><rect x='1.5' y='1.5' width='13' height='12' fill='#dfe8f2' stroke='#6a82a8'/><rect x='2' y='2' width='12' height='2' fill='#8aa6cc'/><path d='M3 7 H7 M3 10.5 H7' stroke='#8a9ab0' stroke-width='1.2'/><rect x='8.5' y='5.5' width='4.5' height='3' fill='#3aa83a'/><rect x='8.5' y='9.5' width='4.5' height='3' fill='#3aa83a'/></svg>
<svg style='position:absolute;left:104px;top:355px;overflow:visible' width='16' height='16' viewBox='0 0 16 16'><rect x='1.5' y='1.5' width='12' height='13' fill='#dce6f0' stroke='#5a7aa0'/><rect x='2' y='2' width='11' height='2.5' fill='#8aa6cc'/><rect x='4.5' y='6.5' width='6' height='6' fill='#e8f4e8' stroke='#2a9a2a' stroke-width='1.3'/></svg>
<svg style='position:absolute;left:168px;top:354px;overflow:visible' width='19' height='18' viewBox='0 0 19 18'><rect x='2.5' y='2.5' width='9' height='13' fill='#dce6f2' stroke='#6a82a8'/><rect x='6.5' y='4.5' width='10' height='12' fill='#f6d47a' stroke='#a88a4a'/><path d='M3 6 H10 L8 4.5' stroke='#e0902a' stroke-width='1.4' fill='none'/><path d='M8 12 H13' stroke='#2a9a2a' stroke-width='1.6'/><path d='M9 8 H15 M9 14.5 H15' stroke='#b8a070' stroke-width='.7'/></svg>
<svg style='position:absolute;left:197px;top:354px;overflow:visible' width='16' height='17' viewBox='0 0 16 17'><rect x='4.5' y='2.5' width='9' height='8' fill='#c8c8cc' stroke='#7a7a80' stroke-width='.9'/><rect x='2.5' y='5.5' width='9' height='9' fill='#a8a8ac' stroke='#6a6a70' stroke-width='.9'/><path d='M4 8 H10 M4 10.5 H8' stroke='#e4e4e4' stroke-width='.8'/><path d='M9 9.5 H14.5 V13 L11.8 15.5 L9 13 Z' fill='#c8c8cc' stroke='#6a6a70' stroke-width='.8'/></svg>
<svg style='position:absolute;left:214px;top:360px;overflow:visible' width='5' height='3' viewBox='0 0 5 3'><path d='M0 0 L5 0 L2.5 3 Z' fill='#777'/></svg>
<svg style='position:absolute;left:224px;top:354px;overflow:visible' width='17' height='17' viewBox='0 0 17 17'><rect x='5.5' y='2.5' width='9' height='8' fill='#c8c8cc' stroke='#7a7a80' stroke-width='.9'/><path d='M7 5 H13 M7 7.5 H13' stroke='#8a8a90' stroke-width='.7'/><path d='M2 15 L8.5 7.5' stroke='#5a5a60' stroke-width='1.8'/><path d='M9.5 9.5 H15.5 V13 L12.5 15.5 L9.5 13 Z' fill='#c0c0c4' stroke='#6a6a70' stroke-width='.8'/></svg>
<svg style='position:absolute;left:242px;top:360px;overflow:visible' width='5' height='3' viewBox='0 0 5 3'><path d='M0 0 L5 0 L2.5 3 Z' fill='#777'/></svg>
<svg style='position:absolute;left:256px;top:354px;overflow:visible' width='17' height='17' viewBox='0 0 17 17'><rect x='1.5' y='1.5' width='9' height='14' fill='#a8d8a0' stroke='#4a9a4a'/><path d='M3 4 H8 M3 7 H8 M3 10 H8 M3 13 H8' stroke='#3a8a3a' stroke-width='.8'/><rect x='8.5' y='3.5' width='7' height='10' fill='#9cc0e8' stroke='#5a7aa8'/><path d='M4 8.5 H10 V6 L14 9 L10 12 V10.5 H4 Z' fill='#f0a840'/></svg>
<svg style='position:absolute;left:275px;top:360px;overflow:visible' width='5' height='3' viewBox='0 0 5 3'><path d='M0 0 L5 0 L2.5 3 Z' fill='#444'/></svg>
<svg style='position:absolute;left:289px;top:354px;overflow:visible' width='17' height='17' viewBox='0 0 17 17'><rect x='1' y='1' width='7' height='3.5' fill='#3aa83a'/><path d='M2 2.7 H7' stroke='#e8f8e8' stroke-width='.6'/><path d='M3 4.5 V13 H6' stroke='#555' stroke-width='.8' fill='none'/><rect x='5.5' y='6.5' width='10' height='7' fill='#9cc0e8' stroke='#5a7aa8'/><rect x='8' y='14' width='5' height='1.5' fill='#888'/></svg>
<svg style='position:absolute;left:312px;top:354px;overflow:visible' width='17' height='17' viewBox='0 0 17 17'><rect x='1' y='1' width='7' height='3.5' fill='#3aa83a'/><path d='M2 2.7 H7' stroke='#e8f8e8' stroke-width='.6'/><path d='M3 4.5 V13 H6' stroke='#555' stroke-width='.8' fill='none'/><rect x='6.5' y='6.5' width='9' height='3.5' rx='1' fill='#9cc0e8' stroke='#5a7aa8'/><rect x='6.5' y='11.5' width='9' height='3.5' rx='1' fill='#9cc0e8' stroke='#5a7aa8'/></svg>
<svg style='position:absolute;left:333px;top:354px;overflow:visible' width='17' height='17' viewBox='0 0 17 17'><rect x='1' y='1' width='7' height='3.5' fill='#3aa83a'/><path d='M2 2.7 H7' stroke='#e8f8e8' stroke-width='.6'/><path d='M3 4.5 V13 H6' stroke='#555' stroke-width='.8' fill='none'/><circle cx='11.5' cy='7.5' r='2.5' fill='#f0c8a0' stroke='#a07050' stroke-width='.7'/><path d='M7 16 Q7 10.5 11.5 10.5 Q16 10.5 16 16 Z' fill='#6a9ad8' stroke='#3a6aa8' stroke-width='.7'/></svg>
<svg style='position:absolute;left:360px;top:354px;overflow:visible' width='18' height='18' viewBox='0 0 18 18'><circle cx='5.5' cy='6' r='3.3' fill='#6cc05a' stroke='#3a9a3a' stroke-width='.7'/><circle cx='13.5' cy='6.5' r='3.3' fill='#f4c068' stroke='#c08a40' stroke-width='.7'/><circle cx='8.8' cy='13' r='3.4' fill='#c89058' stroke='#9a6a3a' stroke-width='.7'/></svg>
<svg style='position:absolute;left:388px;top:354px;overflow:visible' width='17' height='17' viewBox='0 0 17 17'><rect x='1.5' y='1.5' width='13' height='13' fill='#f6e8b0' stroke='#6a82a8' stroke-width='1.1'/><rect x='2' y='2' width='12' height='3' fill='#9cc0e8'/><rect x='2' y='8' width='12' height='2' fill='#3aa83a'/><path d='M2 12 H14' stroke='#ccc'/></svg>
<svg style='position:absolute;left:409px;top:354px;overflow:visible' width='17' height='17' viewBox='0 0 17 17'><rect x='1.5' y='1.5' width='13' height='13' fill='#f6e8b0' stroke='#6a82a8' stroke-width='1.1'/><rect x='2' y='2' width='12' height='2.5' fill='#9cc0e8'/><path d='M2 6.5 H14 M2 12 H14' stroke='#3aa83a' stroke-width='1.6'/><path d='M2 9.2 H14' stroke='#9cc0e8' stroke-width='1.4'/></svg>
<svg style='position:absolute;left:436px;top:354px;overflow:visible' width='16' height='16' viewBox='0 0 16 16'><rect x='1.5' y='1.5' width='13' height='12' fill='#ffffff' stroke='#5b82bd' stroke-width='1.1'/><rect x='2' y='2' width='12' height='4' fill='#9cc0e8'/><rect x='4' y='3' width='5' height='2' fill='#f0b840'/><path d='M2 8.5 H14 M2 11 H14' stroke='#9ab0d0' stroke-width='.8'/></svg>
<svg style='position:absolute;left:458px;top:354px;overflow:visible' width='16' height='16' viewBox='0 0 16 16'><rect x='1.5' y='1.5' width='13' height='12' fill='#ffffff' stroke='#5b82bd' stroke-width='1.1'/><rect x='2' y='2' width='12' height='2.5' fill='#3aa83a'/><rect x='2' y='4.5' width='5' height='9' fill='#9cc0e8'/><path d='M2 7.5 H14 M2 10.5 H14 M7 4.5 V14 M10.5 4.5 V14' stroke='#8aa8d0' stroke-width='.7'/></svg>
<svg style='position:absolute;left:53px;top:427px;overflow:visible' width='14' height='14' viewBox='0 0 14 14'><rect x='1.5' y='0.5' width='11' height='12' fill='#eef2f8' stroke='#4a6a9a'/><rect x='2' y='1' width='10' height='2' fill='#4a6a9a'/><path d='M3 5 H6 M3 7.5 H6' stroke='#7a90b0' stroke-width='.8'/><circle cx='9.5' cy='9.5' r='3' fill='#e07a3a' stroke='#a04a20' stroke-width='.6'/><path d='M8 9.5 H11' stroke='#fff' stroke-width='1'/></svg>
<svg style='position:absolute;left:53px;top:442px;overflow:visible' width='14' height='14' viewBox='0 0 14 14'><rect x='1.5' y='0.5' width='11' height='12' fill='#eef2f8' stroke='#4a6a9a'/><rect x='2' y='1' width='10' height='2' fill='#4a6a9a'/><path d='M3 5 H6 M3 7.5 H6' stroke='#7a90b0' stroke-width='.8'/><circle cx='9.5' cy='9.5' r='3' fill='#2a9a3a' stroke='#1a6a2a' stroke-width='.6'/><path d='M8 9.5 H11 M9.5 8 V11' stroke='#fff' stroke-width='1'/></svg>
<svg style='position:absolute;left:38px;top:516px;overflow:visible' width='14' height='16' viewBox='0 0 14 16'><path d='M1.5 1.5 H9 L12.5 5 V14.5 H1.5 Z' fill='#dce8f4' stroke='#7a90b0'/><circle cx='4' cy='5' r='1.2' fill='#3aa83a'/><circle cx='4' cy='8.5' r='1.2' fill='#e06a3a'/><circle cx='4' cy='12' r='1.2' fill='#3aa83a'/><path d='M6 5 H10.5 M6 8.5 H10.5 M6 12 H10.5' stroke='#8aa0c0' stroke-width='.8'/></svg>
<svg style='position:absolute;left:135px;top:516px;overflow:visible' width='13' height='16' viewBox='0 0 13 16'><rect x='1.5' y='1.5' width='9' height='13' fill='#f6dc8a' stroke='#b08a3a'/><path d='M3.5 4.5 H8.5 M3.5 7 H8.5 M3.5 9.5 H8.5 M3.5 12 H8.5' stroke='#b8903a' stroke-width='.8'/></svg>
<svg style='position:absolute;left:222px;top:517px;overflow:visible' width='16' height='15' viewBox='0 0 16 15'><rect x='4.5' y='0.5' width='7' height='5' fill='#8ab4e0' stroke='#4a70a8'/><path d='M8 5.5 V8 M4 8 H12' stroke='#555' stroke-width='.8'/><rect x='0.5' y='8.5' width='6' height='5' fill='#3aa83a' stroke='#2a7a2a'/><rect x='8.5' y='8.5' width='6' height='5' fill='#f0b860' stroke='#b08040'/></svg>
<svg style='position:absolute;left:298px;top:516px;overflow:visible' width='12' height='15' viewBox='0 0 12 15'><rect x='1' y='0.5' width='10' height='1.5' fill='#8a7050'/><rect x='1' y='13' width='10' height='1.5' fill='#8a7050'/><path d='M2 2 H10 Q10 6 6 7.5 Q10 9 10 13 H2 Q2 9 6 7.5 Q2 6 2 2 Z' fill='#f6e6c0' stroke='#b89060' stroke-width='.8'/><path d='M3.5 12.5 Q6 9 8.5 12.5 Z M4 4 H8 L6 6.5 Z' fill='#e0a040'/></svg>
<svg style='position:absolute;left:710px;top:541px;overflow:visible' width='10' height='16' viewBox='0 0 10 16'><rect x='0.5' y='0.8' width='9' height='1.2' fill='#a8b0c0'/><rect x='0.5' y='13.2' width='9' height='1.2' fill='#a8b0c0'/><path d='M1.5 2 H8.5 Q8.5 6 5 7.6 Q8.5 9.2 8.5 13.2 H1.5 Q1.5 9.2 5 7.6 Q1.5 6 1.5 2 Z' fill='#f4dca8' stroke='#d0a868' stroke-width='.7'/><path d='M2.5 12.8 Q5 9.5 7.5 12.8 Z M3 3.5 H7 L5 6.5 Z' fill='#e0a848'/></svg>
<svg style='position:absolute;left:735px;top:548px;overflow:visible' width='8' height='9' viewBox='0 0 8 9'><rect x='5' y='1' width='1.5' height='1.5' fill='#cfd8e8'/><rect x='3' y='3.5' width='1.5' height='1.5' fill='#cfd8e8'/><rect x='5' y='3.5' width='1.5' height='1.5' fill='#cfd8e8'/><rect x='1' y='6' width='1.5' height='1.5' fill='#cfd8e8'/><rect x='3' y='6' width='1.5' height='1.5' fill='#cfd8e8'/><rect x='5' y='6' width='1.5' height='1.5' fill='#cfd8e8'/></svg>
<div style="position:absolute;left:412.8px;top:8.00px;font-size:9.6px;line-height:12px;color:#555555;white-space:pre;-webkit-text-stroke:0.1px #555555;transform-origin:0 0;transform:scaleX(0.9593);">EMCO Remote Installer Professional - Site License - Unlimi...</div>
<div style="position:absolute;left:339.5px;top:7.00px;font-size:9.6px;line-height:12px;color:#555555;white-space:pre;-webkit-text-stroke:0.1px #555555;transform-origin:0 0;transform:scaleX(0.9944);">Inventory Tools</div>
<div style="position:absolute;left:66.5px;top:31.00px;font-size:9.6px;line-height:12px;color:#254a86;white-space:pre;-webkit-text-stroke:0.1px #254a86;transform-origin:0 0;transform:scaleX(0.9495);">Home</div>
<div style="position:absolute;left:112.6px;top:31.00px;font-size:9.6px;line-height:12px;color:#444444;white-space:pre;-webkit-text-stroke:0.1px #444444;transform-origin:0 0;transform:scaleX(0.9941);">Deployment</div>
<div style="position:absolute;left:185px;top:31.00px;font-size:9.6px;line-height:12px;color:#444444;white-space:pre;-webkit-text-stroke:0.1px #444444;transform-origin:0 0;transform:scaleX(0.9848);">Software</div>
<div style="position:absolute;left:244.7px;top:31.00px;font-size:9.6px;line-height:12px;color:#444444;white-space:pre;-webkit-text-stroke:0.1px #444444;transform-origin:0 0;transform:scaleX(0.9794);">View</div>
<div style="position:absolute;left:286.8px;top:31.00px;font-size:9.6px;line-height:12px;color:#444444;white-space:pre;-webkit-text-stroke:0.1px #444444;transform-origin:0 0;transform:scaleX(0.9485);">Program</div>
<div style="position:absolute;left:343.5px;top:31.00px;font-size:9.6px;line-height:12px;color:#444444;white-space:pre;-webkit-text-stroke:0.1px #444444;transform-origin:0 0;transform:scaleX(1.0008);">Inventory</div>
<div style="position:absolute;left:19.4px;top:80.00px;font-size:9.6px;line-height:12px;color:#444444;white-space:pre;-webkit-text-stroke:0.1px #444444;transform-origin:0 0;transform:scaleX(0.9741);">Deploy</div>
<div style="position:absolute;left:10.5px;top:90.00px;font-size:9.6px;line-height:12px;color:#444444;white-space:pre;-webkit-text-stroke:0.1px #444444;transform-origin:0 0;transform:scaleX(0.9769);">Software</div>
<div style="position:absolute;left:80px;top:80.00px;font-size:9.6px;line-height:12px;color:#444444;white-space:pre;-webkit-text-stroke:0.1px #444444;transform-origin:0 0;transform:scaleX(0.9143);">Scan</div>
<div style="position:absolute;left:66px;top:90.00px;font-size:9.6px;line-height:12px;color:#444444;white-space:pre;-webkit-text-stroke:0.1px #444444;transform-origin:0 0;transform:scaleX(0.9769);">Software</div>
<div style="position:absolute;left:42.5px;top:107.00px;font-size:9.6px;line-height:12px;color:#444444;white-space:pre;-webkit-text-stroke:0.1px #444444;transform-origin:0 0;transform:scaleX(0.9901);">Software</div>
<div style="position:absolute;left:128.8px;top:79.00px;font-size:9.6px;line-height:12px;color:#444444;white-space:pre;-webkit-text-stroke:0.1px #444444;transform-origin:0 0;transform:scaleX(0.9630);">Enumerate</div>
<div style="position:absolute;left:132px;top:90.00px;font-size:9.6px;line-height:12px;color:#444444;white-space:pre;-webkit-text-stroke:0.1px #444444;transform-origin:0 0;transform:scaleX(0.9498);">Machines</div>
<div style="position:absolute;left:202.5px;top:51.00px;font-size:9.6px;line-height:12px;color:#444444;white-space:pre;-webkit-text-stroke:0.1px #444444;transform-origin:0 0;transform:scaleX(0.9796);">Scan Network</div>
<div style="position:absolute;left:202.5px;top:70.00px;font-size:9.6px;line-height:12px;color:#444444;white-space:pre;-webkit-text-stroke:0.1px #444444;transform-origin:0 0;transform:scaleX(0.9483);">Add IP Range</div>
<div style="position:absolute;left:202.5px;top:88.00px;font-size:9.6px;line-height:12px;color:#444444;white-space:pre;-webkit-text-stroke:0.1px #444444;transform-origin:0 0;transform:scaleX(0.9911);">Add Machine</div>
<div style="position:absolute;left:165px;top:107.00px;font-size:9.6px;line-height:12px;color:#444444;white-space:pre;-webkit-text-stroke:0.1px #444444;transform-origin:0 0;transform:scaleX(0.9925);">Enumeration</div>
<div style="position:absolute;left:278.5px;top:79.00px;font-size:9.6px;line-height:12px;color:#444444;white-space:pre;-webkit-text-stroke:0.1px #444444;transform-origin:0 0;transform:scaleX(1.0042);">Bundle</div>
<div style="position:absolute;left:320px;top:79.00px;font-size:9.6px;line-height:12px;color:#444444;white-space:pre;-webkit-text-stroke:0.1px #444444;transform-origin:0 0;transform:scaleX(1.0051);">Bundle from</div>
<div style="position:absolute;left:322px;top:90.00px;font-size:9.6px;line-height:12px;color:#444444;white-space:pre;-webkit-text-stroke:0.1px #444444;transform-origin:0 0;transform:scaleX(0.9502);">Template</div>
<div style="position:absolute;left:383px;top:79.00px;font-size:9.6px;line-height:12px;color:#444444;white-space:pre;-webkit-text-stroke:0.1px #444444;transform-origin:0 0;transform:scaleX(1.0042);">Bundle</div>
<div style="position:absolute;left:386px;top:90.00px;font-size:9.6px;line-height:12px;color:#444444;white-space:pre;-webkit-text-stroke:0.1px #444444;transform-origin:0 0;transform:scaleX(1.0123);">Group</div>
<div style="position:absolute;left:397px;top:107.00px;font-size:9.6px;line-height:12px;color:#444444;white-space:pre;-webkit-text-stroke:0.1px #444444;transform-origin:0 0;transform:scaleX(0.9894);">New</div>
<div style="position:absolute;left:430.5px;top:79.00px;font-size:9.6px;line-height:12px;color:#444444;white-space:pre;-webkit-text-stroke:0.1px #444444;transform-origin:0 0;transform:scaleX(1.0204);">Collection</div>
<div style="position:absolute;left:490px;top:79.00px;font-size:9.6px;line-height:12px;color:#444444;white-space:pre;-webkit-text-stroke:0.1px #444444;transform-origin:0 0;transform:scaleX(0.9704);">Scheduled</div>
<div style="position:absolute;left:498px;top:90.00px;font-size:9.6px;line-height:12px;color:#444444;white-space:pre;-webkit-text-stroke:0.1px #444444;transform-origin:0 0;transform:scaleX(0.8614);">Task</div>
<div style="position:absolute;left:22.00px;top:143px;font-size:9.6px;line-height:12px;color:#444444;white-space:pre;-webkit-text-stroke:0.1px #444444;transform-origin:0 0;transform:rotate(90deg) scaleX(0.9663);">Network</div>
<div style="position:absolute;left:22.00px;top:199px;font-size:9.6px;line-height:12px;color:#444444;white-space:pre;-webkit-text-stroke:0.1px #444444;transform-origin:0 0;transform:rotate(90deg) scaleX(0.9376);">Alternate Credentials</div>
<div style="position:absolute;left:59.7px;top:128.00px;font-size:9.6px;line-height:12px;color:#444444;white-space:pre;-webkit-text-stroke:0.1px #444444;transform-origin:0 0;transform:scaleX(0.9912);">Software Inventory</div>
<div style="position:absolute;left:203px;top:128.00px;font-size:9.6px;line-height:12px;color:#ffffff;white-space:pre;-webkit-text-stroke:0.1px #ffffff;transform-origin:0 0;transform:scaleX(0.9946);">Inventory Snapshots</div>
<div style="position:absolute;left:353.5px;top:128.00px;font-size:9.6px;line-height:12px;color:#444444;white-space:pre;-webkit-text-stroke:0.1px #444444;transform-origin:0 0;transform:scaleX(0.9907);">Software Bundles</div>
<div style="position:absolute;left:492px;top:128.00px;font-size:9.6px;line-height:12px;color:#444444;white-space:pre;-webkit-text-stroke:0.1px #444444;transform-origin:0 0;transform:scaleX(0.9549);">Tasks and Schedule</div>
<div style="position:absolute;left:56px;top:152.00px;font-size:9.6px;line-height:12px;color:#333;white-space:pre;-webkit-text-stroke:0.1px #333;transform-origin:0 0;transform:scaleX(0.9805);">Specific Snapshots</div>
<div style="position:absolute;left:161px;top:152.00px;font-size:9.6px;line-height:12px;color:#333;white-space:pre;-webkit-text-stroke:0.1px #333;transform-origin:0 0;transform:scaleX(0.9800);">All Snapshots</div>
<div style="position:absolute;left:40.5px;top:171.00px;font-size:9.6px;line-height:12px;color:#333;white-space:pre;-webkit-text-stroke:0.1px #333;transform-origin:0 0;transform:scaleX(0.9997);">The snapshots for &#x27;Network&#x27; (Network)</div>
<div style="position:absolute;left:54.5px;top:187.00px;font-size:9.6px;line-height:12px;color:#333;white-space:pre;-webkit-text-stroke:0.1px #333;transform-origin:0 0;transform:scaleX(0.8823);">Time</div>
<div style="position:absolute;left:175.5px;top:187.00px;font-size:9.6px;line-height:12px;color:#333;white-space:pre;-webkit-text-stroke:0.1px #333;transform-origin:0 0;transform:scaleX(0.9617);">Comment</div>
<div style="position:absolute;left:54.5px;top:203.00px;font-size:9.6px;line-height:12px;color:#333;white-space:pre;-webkit-text-stroke:0.1px #333;transform-origin:0 0;transform:scaleX(0.9540);">11/11/2015 12:53:08 PM</div>
<div style="position:absolute;left:175.5px;top:203.00px;font-size:9.6px;line-height:12px;color:#333;white-space:pre;-webkit-text-stroke:0.1px #333;transform-origin:0 0;transform:scaleX(1.0038);">Created by the &#x27;Quick Install&#x27; operation.</div>
<div style="position:absolute;left:54.5px;top:218.00px;font-size:9.6px;line-height:12px;color:#333;white-space:pre;-webkit-text-stroke:0.1px #333;transform-origin:0 0;transform:scaleX(0.9540);">11/11/2015 12:51:58 PM</div>
<div style="position:absolute;left:175.5px;top:218.00px;font-size:9.6px;line-height:12px;color:#333;white-space:pre;-webkit-text-stroke:0.1px #333;transform-origin:0 0;transform:scaleX(1.0073);">Created by the &#x27;Install Software&#x27; operation.</div>
<div style="position:absolute;left:54.5px;top:233.00px;font-size:9.6px;line-height:12px;color:#333;white-space:pre;-webkit-text-stroke:0.1px #333;transform-origin:0 0;transform:scaleX(0.9540);">11/11/2015 12:00:26 PM</div>
<div style="position:absolute;left:175.5px;top:233.00px;font-size:9.6px;line-height:12px;color:#333;white-space:pre;-webkit-text-stroke:0.1px #333;transform-origin:0 0;transform:scaleX(0.9932);">Created by the &#x27;Scan Software&#x27; operation.</div>
<div style="position:absolute;left:54.5px;top:248.00px;font-size:9.6px;line-height:12px;color:#333;white-space:pre;-webkit-text-stroke:0.1px #333;transform-origin:0 0;transform:scaleX(0.9705);">11/11/2015 11:56:08 AM</div>
<div style="position:absolute;left:175.5px;top:248.00px;font-size:9.6px;line-height:12px;color:#333;white-space:pre;-webkit-text-stroke:0.1px #333;transform-origin:0 0;transform:scaleX(0.9725);">Created by the &#x27;Repair Remote Console Service&#x27; task. Started on schedule.</div>
<div style="position:absolute;left:54.5px;top:263.00px;font-size:9.6px;line-height:12px;color:#333;white-space:pre;-webkit-text-stroke:0.1px #333;transform-origin:0 0;transform:scaleX(0.9705);">11/11/2015 11:55:32 AM</div>
<div style="position:absolute;left:175.5px;top:263.00px;font-size:9.6px;line-height:12px;color:#333;white-space:pre;-webkit-text-stroke:0.1px #333;transform-origin:0 0;transform:scaleX(1.0040);">Initial Snapshot - Dreamlight</div>
<div style="position:absolute;left:54.5px;top:277.00px;font-size:9.6px;line-height:12px;color:#333;white-space:pre;-webkit-text-stroke:0.1px #333;transform-origin:0 0;transform:scaleX(0.9637);">11/11/2015 10:59:32 AM</div>
<div style="position:absolute;left:175.5px;top:277.00px;font-size:9.6px;line-height:12px;color:#333;white-space:pre;-webkit-text-stroke:0.1px #333;transform-origin:0 0;transform:scaleX(0.9932);">Created by the &#x27;Scan Software&#x27; operation.</div>
<div style="position:absolute;left:54.5px;top:292.00px;font-size:9.6px;line-height:12px;color:#333;white-space:pre;-webkit-text-stroke:0.1px #333;transform-origin:0 0;transform:scaleX(0.9637);">11/11/2015 10:58:06 AM</div>
<div style="position:absolute;left:54.5px;top:307.00px;font-size:9.6px;line-height:12px;color:#333;white-space:pre;-webkit-text-stroke:0.1px #333;transform-origin:0 0;transform:scaleX(0.9683);">11/11/2015 9:30:24 AM</div>
<div style="position:absolute;left:175.5px;top:307.00px;font-size:9.6px;line-height:12px;color:#333;white-space:pre;-webkit-text-stroke:0.1px #333;transform-origin:0 0;transform:scaleX(0.9858);">Created by the &#x27;Install Adobe Readers&#x27; task. Started on schedule.</div>
<div style="position:absolute;left:54.5px;top:322.00px;font-size:9.6px;line-height:12px;color:#333;white-space:pre;-webkit-text-stroke:0.1px #333;transform-origin:0 0;transform:scaleX(0.9475);">11/10/2015 12:21:13 PM</div>
<div style="position:absolute;left:175.5px;top:322.00px;font-size:9.6px;line-height:12px;color:#333;white-space:pre;-webkit-text-stroke:0.1px #333;transform-origin:0 0;transform:scaleX(0.9725);">Created by the &#x27;Repair Remote Console Service&#x27; task. Started on schedule.</div>
<div style="position:absolute;left:57px;top:358.00px;font-size:9.6px;line-height:12px;color:#333;white-space:pre;-webkit-text-stroke:0.1px #333;transform-origin:0 0;transform:scaleX(0.9376);">Programs</div>
<div style="position:absolute;left:122px;top:358.00px;font-size:9.6px;line-height:12px;color:#333;white-space:pre;-webkit-text-stroke:0.1px #333;transform-origin:0 0;transform:scaleX(0.9515);">Updates</div>
<div style="position:absolute;left:40.5px;top:376.00px;font-size:9.6px;line-height:12px;color:#333;white-space:pre;-webkit-text-stroke:0.1px #333;transform-origin:0 0;transform:scaleX(0.9831);">The programs comparison results for the &#x27;11/11/2015 9:30:24 AM&#x27; and &#x27;11/10/2015 12:21:13 PM&#x27; snapshots</div>
<div style="position:absolute;left:38px;top:392.00px;font-size:9.6px;line-height:12px;color:#333;white-space:pre;-webkit-text-stroke:0.1px #333;transform-origin:0 0;transform:scaleX(0.9558);">Status</div>
<div style="position:absolute;left:72px;top:392.00px;font-size:9.6px;line-height:12px;color:#333;white-space:pre;-webkit-text-stroke:0.1px #333;transform-origin:0 0;transform:scaleX(0.9377);">Name</div>
<div style="position:absolute;left:282px;top:392.00px;font-size:9.6px;line-height:12px;color:#333;white-space:pre;-webkit-text-stroke:0.1px #333;transform-origin:0 0;transform:scaleX(0.9550);">Publisher</div>
<div style="position:absolute;left:433px;top:392.00px;font-size:9.6px;line-height:12px;color:#333;white-space:pre;-webkit-text-stroke:0.1px #333;transform-origin:0 0;transform:scaleX(1.0156);">Installed On</div>
<div style="position:absolute;left:505px;top:392.00px;font-size:9.6px;line-height:12px;color:#333;white-space:pre;-webkit-text-stroke:0.1px #333;transform-origin:0 0;transform:scaleX(0.9550);">Size</div>
<div style="position:absolute;left:580px;top:392.00px;font-size:9.6px;line-height:12px;color:#333;white-space:pre;-webkit-text-stroke:0.1px #333;transform-origin:0 0;transform:scaleX(0.9550);">Version</div>
<div style="position:absolute;left:655px;top:392.00px;font-size:9.6px;line-height:12px;color:#333;white-space:pre;-webkit-text-stroke:0.1px #333;transform-origin:0 0;transform:scaleX(0.9550);">Bitness</div>
<div style="position:absolute;left:54px;top:411.00px;font-size:9.6px;line-height:12px;color:#333;white-space:pre;-webkit-text-stroke:0.1px #333;font-weight:bold;transform-origin:0 0;transform:scaleX(0.9534);">Machine: WXP-X64-MKII - [2]</div>
<div style="position:absolute;left:72px;top:428.00px;font-size:9.6px;line-height:12px;color:#333;white-space:pre;-webkit-text-stroke:0.1px #333;transform-origin:0 0;transform:scaleX(0.9281);">Adobe Reader X (10.1.0)</div>
<div style="position:absolute;left:282px;top:428.00px;font-size:9.6px;line-height:12px;color:#333;white-space:pre;-webkit-text-stroke:0.1px #333;transform-origin:0 0;transform:scaleX(0.9755);">Adobe Systems Incorporated</div>
<div style="position:absolute;left:433px;top:428.00px;font-size:9.6px;line-height:12px;color:#333;white-space:pre;-webkit-text-stroke:0.1px #333;transform-origin:0 0;transform:scaleX(0.9849);">11/10/2015</div>
<div style="position:absolute;left:529px;top:428.00px;font-size:9.6px;line-height:12px;color:#333;white-space:pre;-webkit-text-stroke:0.1px #333;transform-origin:0 0;transform:scaleX(0.9481);">232.99 MB</div>
<div style="position:absolute;left:580px;top:428.00px;font-size:9.6px;line-height:12px;color:#333;white-space:pre;-webkit-text-stroke:0.1px #333;transform-origin:0 0;transform:scaleX(0.9550);">10.1.0</div>
<div style="position:absolute;left:655px;top:428.00px;font-size:9.6px;line-height:12px;color:#333;white-space:pre;-webkit-text-stroke:0.1px #333;transform-origin:0 0;transform:scaleX(0.9550);">32-bit</div>
<div style="position:absolute;left:72px;top:443.00px;font-size:9.6px;line-height:12px;color:#333;white-space:pre;-webkit-text-stroke:0.1px #333;transform-origin:0 0;transform:scaleX(0.9281);">Adobe Reader X (10.1.5)</div>
<div style="position:absolute;left:282px;top:443.00px;font-size:9.6px;line-height:12px;color:#333;white-space:pre;-webkit-text-stroke:0.1px #333;transform-origin:0 0;transform:scaleX(0.9755);">Adobe Systems Incorporated</div>
<div style="position:absolute;left:433px;top:443.00px;font-size:9.6px;line-height:12px;color:#333;white-space:pre;-webkit-text-stroke:0.1px #333;transform-origin:0 0;transform:scaleX(1.0001);">11/11/2015</div>
<div style="position:absolute;left:529px;top:443.00px;font-size:9.6px;line-height:12px;color:#333;white-space:pre;-webkit-text-stroke:0.1px #333;transform-origin:0 0;transform:scaleX(0.9481);">248.83 MB</div>
<div style="position:absolute;left:580px;top:443.00px;font-size:9.6px;line-height:12px;color:#333;white-space:pre;-webkit-text-stroke:0.1px #333;transform-origin:0 0;transform:scaleX(0.9550);">10.1.5</div>
<div style="position:absolute;left:655px;top:443.00px;font-size:9.6px;line-height:12px;color:#333;white-space:pre;-webkit-text-stroke:0.1px #333;transform-origin:0 0;transform:scaleX(0.9550);">32-bit</div>
<div style="position:absolute;left:54px;top:518.00px;font-size:9.6px;line-height:12px;color:#333;white-space:pre;-webkit-text-stroke:0.1px #333;transform-origin:0 0;transform:scaleX(0.9636);">Execution Results</div>
<div style="position:absolute;left:149.5px;top:518.00px;font-size:9.6px;line-height:12px;color:#333;white-space:pre;-webkit-text-stroke:0.1px #333;transform-origin:0 0;transform:scaleX(1.0136);">Application Log</div>
<div style="position:absolute;left:238px;top:518.00px;font-size:9.6px;line-height:12px;color:#333;white-space:pre;-webkit-text-stroke:0.1px #333;transform-origin:0 0;transform:scaleX(0.9744);">All Machines</div>
<div style="position:absolute;left:313px;top:518.00px;font-size:9.6px;line-height:12px;color:#333;white-space:pre;-webkit-text-stroke:0.1px #333;transform-origin:0 0;transform:scaleX(1.0119);">Operation Management</div>
<div style="position:absolute;left:8px;top:543.00px;font-size:9.6px;line-height:12px;color:#ffffff;white-space:pre;-webkit-text-stroke:0.1px #ffffff;transform-origin:0 0;transform:scaleX(0.9591);">Done</div>
<div style="position:absolute;left:628px;top:543.00px;font-size:9.6px;line-height:12px;color:#888;white-space:pre;-webkit-text-stroke:0.1px #888;transform-origin:0 0;transform:scaleX(0.9369);">0%</div>
<div style="position:absolute;left:54.5px;top:337.00px;font-size:9.6px;line-height:12px;color:#333;white-space:pre;-webkit-text-stroke:0.1px #333;transform-origin:0 0;transform:scaleX(0.9475);clip-path:inset(0 0 8.6px 0);">11/10/2015 10:23:04 PM</div>
</body></html>
